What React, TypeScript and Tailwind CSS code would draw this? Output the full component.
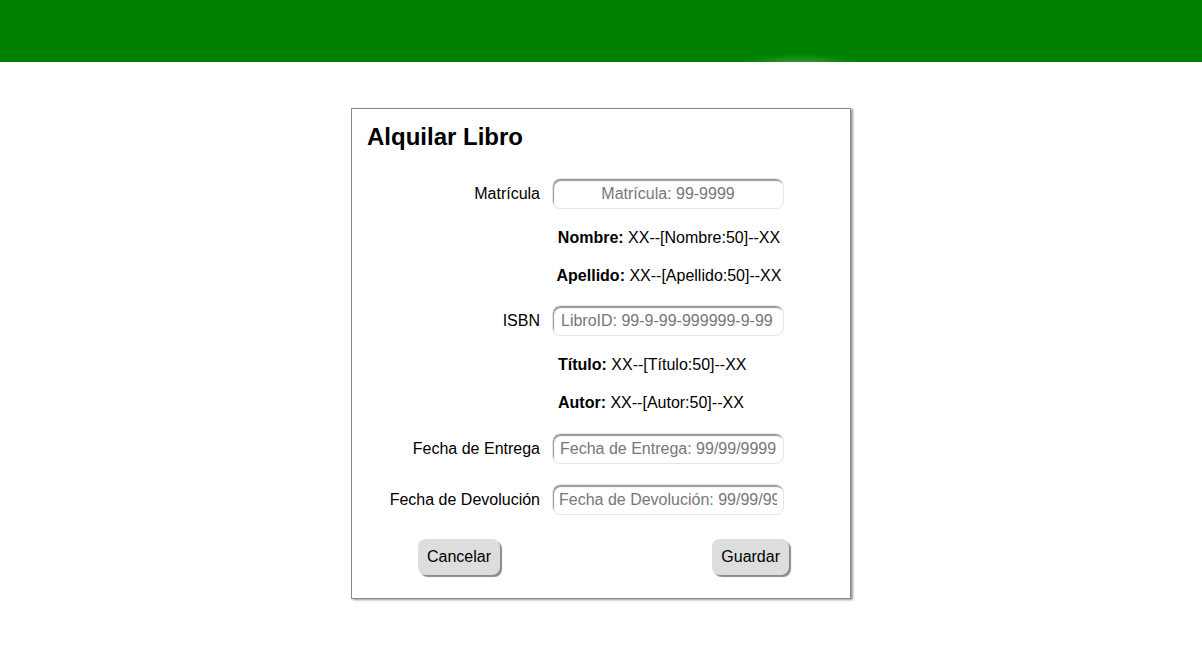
export default function App() {
  const font = { fontFamily: '"Liberation Sans", Arial, sans-serif' }
  const inputCls =
    "h-[31px] w-[232px] rounded-lg border border-[#e6e6e6] bg-white px-2 text-base text-black outline-none shadow-[inset_1px_2px_1px_#9a9a9a] placeholder:text-[#777]"

  return (
    <div className="min-h-screen bg-white text-black" style={font}>
      <header className="h-[62px] bg-[#008000] bg-[radial-gradient(ellipse_60px_8px_at_800px_62px,rgba(255,255,255,0.18),transparent)]" />

      <div className="mx-auto mt-[46px] w-[500px] border border-[#888] bg-white pl-[15px] pr-4 pt-[15px] pb-[23px] shadow-[2px_1px_2px_#999]">
        <h1 className="text-[24px] font-bold leading-[26px]">Alquilar Libro</h1>

        <div className="mt-7 flex flex-col gap-5">
          <div className="flex items-center">
            <label className="w-[173px] text-right text-base">Matrícula</label>
            <input className={`${inputCls} ml-3 text-center`} placeholder="Matrícula: 99-9999" />
          </div>

          <div className="ml-[186px] w-[232px] text-center text-base leading-[18px]">
            <b>Nombre:</b> XX--[Nombre:50]--XX
          </div>
          <div className="ml-[186px] w-[232px] text-center text-base leading-[18px]">
            <b>Apellido:</b> XX--[Apellido:50]--XX
          </div>

          <div className="flex items-center">
            <label className="w-[173px] text-right text-base">ISBN</label>
            <input className={`${inputCls} ml-3`} placeholder="LibroID: 99-9-99-999999-9-99" />
          </div>

          <div className="ml-[191px] text-base leading-[18px]">
            <b>Título:</b> XX--[Título:50]--XX
          </div>
          <div className="ml-[191px] text-base leading-[18px]">
            <b>Autor:</b> XX--[Autor:50]--XX
          </div>

          <div className="mt-px flex items-center">
            <label className="w-[173px] text-right text-base">Fecha de Entrega</label>
            <input className={`${inputCls} ml-3 px-[7px]`} placeholder="Fecha de Entrega: 99/99/9999" />
          </div>

          <div className="flex items-center">
            <label className="w-[173px] text-right text-base">Fecha de Devolución</label>
            <input className={`${inputCls} ml-3 px-[6px]`} placeholder="Fecha de Devolución: 99/99/9999" />
          </div>
        </div>

        <div className="mt-6 flex justify-between pl-[51px] pr-[45px]">
          <button className="h-[36px] rounded-lg bg-[#dddddd] px-[9px] text-base shadow-[2px_2px_1px_#8a8a8a]">
            Cancelar
          </button>
          <button className="h-[36px] rounded-lg bg-[#dddddd] px-[9px] text-base shadow-[2px_2px_1px_#8a8a8a]">
            Guardar
          </button>
        </div>
      </div>
    </div>
  )
}
